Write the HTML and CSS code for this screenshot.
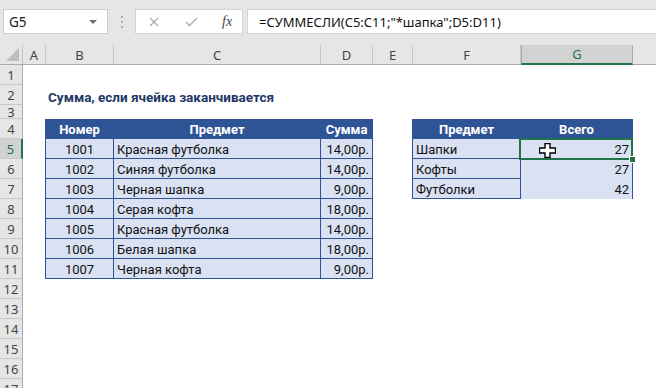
FILE: index.html
```html
<!DOCTYPE html>
<html lang="ru">
<head>
  <meta charset="UTF-8">
  <title>Сумма, если ячейка заканчивается</title>
  <link rel="stylesheet" href="styles.css">
</head>
<body>
  <!-- Formula bar -->
  <div class="toolbar">
    <div class="namebox"><span>G5</span><span class="caret"></span></div>
    <div class="grip"><i></i><i></i><i></i></div>
    <div class="fxbox">
      <svg class="ico-x" width="10" height="10" viewBox="0 0 10 10"><path d="M1 1L9 9M9 1L1 9" stroke="#a8a8a8" stroke-width="1.2" fill="none"/></svg>
      <svg class="ico-ok" width="13" height="10" viewBox="0 0 13 10"><path d="M1 5L4.5 8.5L12 1" stroke="#b4b4b4" stroke-width="1.6" fill="none"/></svg>
      <span class="fx">fx</span>
    </div>
    <div class="formula">=СУММЕСЛИ(C5:C11;"*шапка";D5:D11)</div>
  </div>

  <!-- Sheet -->
  <div class="sheet">
    <div class="row colheads">
      <div class="corner"><span class="tri"></span></div>
      <div class="ch w-a">A</div>
      <div class="ch w-b">B</div>
      <div class="ch w-c">C</div>
      <div class="ch w-d">D</div>
      <div class="ch w-e">E</div>
      <div class="ch w-f">F</div>
      <div class="ch w-g active">G</div>
      <div class="ch last"></div>
    </div>

    <div class="row"><div class="rh">1</div></div>
    <div class="row">
      <div class="rh">2</div>
      <div class="sp-a"></div>
      <div class="title">Сумма, если ячейка заканчивается</div>
    </div>
    <div class="row short"><div class="rh">3</div></div>

    <div class="row">
      <div class="rh">4</div>
      <div class="sp-a"></div>
      <div class="cell hd b center">Номер</div>
      <div class="cell hd c center">Предмет</div>
      <div class="cell hd d center">Сумма</div>
      <div class="sp-e"></div>
      <div class="cell hd f center">Предмет</div>
      <div class="cell hd g center">Всего</div>
    </div>
    <div class="row">
      <div class="rh active">5</div>
      <div class="sp-a"></div>
      <div class="cell b center">1001</div>
      <div class="cell c">Красная футболка</div>
      <div class="cell d right">14,00р.</div>
      <div class="sp-e"></div>
      <div class="cell f">Шапки</div>
      <div class="cell g open right selected">
        <svg class="cursor" width="17" height="15" viewBox="0 0 17 15"><path d="M6 0.5H11V5H16.5V10H11V14.5H6V10H0.5V5H6Z" fill="#fff" stroke="#000" stroke-width="1.4"/></svg>
        27
      </div>
    </div>
    <div class="row">
      <div class="rh">6</div>
      <div class="sp-a"></div>
      <div class="cell b center">1002</div>
      <div class="cell c">Синяя футболка</div>
      <div class="cell d right">14,00р.</div>
      <div class="sp-e"></div>
      <div class="cell f">Кофты</div>
      <div class="cell g open right">27</div>
    </div>
    <div class="row">
      <div class="rh">7</div>
      <div class="sp-a"></div>
      <div class="cell b center">1003</div>
      <div class="cell c">Черная шапка</div>
      <div class="cell d right">9,00р.</div>
      <div class="sp-e"></div>
      <div class="cell f">Футболки</div>
      <div class="cell g open right">42</div>
    </div>
    <div class="row">
      <div class="rh">8</div>
      <div class="sp-a"></div>
      <div class="cell b center">1004</div>
      <div class="cell c">Серая кофта</div>
      <div class="cell d right">18,00р.</div>
    </div>
    <div class="row">
      <div class="rh">9</div>
      <div class="sp-a"></div>
      <div class="cell b center">1005</div>
      <div class="cell c">Красная футболка</div>
      <div class="cell d right">14,00р.</div>
    </div>
    <div class="row">
      <div class="rh">10</div>
      <div class="sp-a"></div>
      <div class="cell b center">1006</div>
      <div class="cell c">Белая шапка</div>
      <div class="cell d right">18,00р.</div>
    </div>
    <div class="row">
      <div class="rh">11</div>
      <div class="sp-a"></div>
      <div class="cell b center">1007</div>
      <div class="cell c">Черная кофта</div>
      <div class="cell d right">9,00р.</div>
    </div>

    <div class="row"><div class="rh">12</div></div>
    <div class="row"><div class="rh">13</div></div>
    <div class="row"><div class="rh">14</div></div>
    <div class="row"><div class="rh">15</div></div>
    <div class="row"><div class="rh">16</div></div>
    <div class="row"><div class="rh">17</div></div>
  </div>
</body>
</html>
```

FILE: styles.css
```css
body {
  margin: 0;
  width: 656px;
  height: 388px;
  overflow: hidden;
  background: #fff;
  font-family: "Noto Sans", "Open Sans", sans-serif;
}

/* Formula bar */
.toolbar {
  height: 45px;
  background: #e6e6e6;
  display: flex;
  align-items: flex-start;
  padding-top: 9px;
  box-sizing: border-box;
}

.namebox {
  margin-left: 3px;
  width: 105px;
  height: 25px;
  background: #fff;
  border: 1px solid #cfcfcf;
  box-sizing: border-box;
  display: flex;
  align-items: center;
  justify-content: space-between;
  padding: 0 10px 0 5px;
  font-size: 13.5px;
  color: #222;
}

.caret {
  border-top: 4px solid #707070;
  border-left: 4px solid transparent;
  border-right: 4px solid transparent;
}

.grip {
  width: 27px;
  height: 25px;
  display: flex;
  flex-direction: column;
  align-items: center;
  justify-content: center;
  gap: 3px;
}

.grip i {
  width: 2px;
  height: 2px;
  background: #b0b0b0;
}

.fxbox {
  width: 108px;
  height: 25px;
  background: #fff;
  border: 1px solid #d4d4d4;
  box-sizing: border-box;
  display: flex;
  align-items: center;
  padding-left: 13px;
}

.ico-x {
  margin-right: 26px;
}

.ico-ok {
  margin-right: 24px;
}

.fx {
  font-family: "Liberation Serif", serif;
  font-style: italic;
  font-size: 14px;
  color: #444;
}

.formula {
  flex: 1;
  margin-left: 4px;
  height: 25px;
  background: #fff;
  border: 1px solid #d4d4d4;
  border-right: none;
  box-sizing: border-box;
  display: flex;
  align-items: center;
  padding-left: 11px;
  font-size: 13px;
  color: #111;
  white-space: nowrap;
}

/* Sheet */
.row {
  display: flex;
  height: 20px;
}

.row.short {
  height: 14px;
}

.colheads {
  background: #e6e6e6;
  border-bottom: 1px solid #ababab;
  box-sizing: border-box;
}

.corner {
  width: 23px;
  border-right: 1px solid #c6c6c6;
  box-sizing: border-box;
  position: relative;
}

.tri {
  position: absolute;
  right: 3px;
  bottom: 3px;
  border-bottom: 13px solid #bdbdbd;
  border-left: 13px solid transparent;
}

.ch {
  box-sizing: border-box;
  border-right: 1px solid #c6c6c6;
  display: flex;
  align-items: center;
  justify-content: center;
  font-size: 13px;
  color: #444;
}

.ch.w-a { width: 23px; }
.ch.w-b { width: 68px; }
.ch.w-c { width: 207px; }
.ch.w-d { width: 52px; }
.ch.w-e { width: 40px; }
.ch.w-f { width: 108px; }
.ch.w-g { width: 112px; }

.ch.last {
  flex: 1;
  border-right: none;
}

.ch.active {
  background: #d2d2d2;
  color: #217346;
  border-left: 1px solid #ababab;
  border-right: 1px solid #ababab;
  border-bottom: 2px solid #217346;
  margin-bottom: -1px;
}

.rh {
  width: 23px;
  flex: none;
  box-sizing: border-box;
  background: #e6e6e6;
  border-right: 1px solid #ababab;
  border-bottom: 1px solid #c8c8c8;
  display: flex;
  align-items: center;
  justify-content: center;
  font-size: 13px;
  color: #444;
}

.rh.active {
  background: #d2d2d2;
  color: #217346;
  border-right: 2px solid #217346;
}

.sp-a {
  width: 22px;
}

.sp-e {
  width: 39px;
}

.title {
  padding-left: 3px;
  padding-top: 3px;
  display: flex;
  align-items: center;
  font-family: "Roboto", "Noto Sans", sans-serif;
  font-weight: bold;
  font-size: 13.5px;
  color: #203864;
  white-space: nowrap;
}

.cell {
  box-sizing: border-box;
  height: 20px;
  background: #d9e1f2;
  border-right: 1px solid #2f5496;
  border-bottom: 1px solid #2f5496;
  display: flex;
  align-items: center;
  padding: 1px 3px 0;
  font-family: "Roboto", "Noto Sans", sans-serif;
  font-size: 13px;
  color: #111;
  white-space: nowrap;
}

.cell.hd {
  background: #2f5496;
  color: #fff;
  font-weight: bold;
}

.cell.b,
.cell.f {
  border-left: 1px solid #2f5496;
}

.cell.b { width: 69px; }
.cell.c { width: 207px; }
.cell.d { width: 52px; }
.cell.f { width: 109px; }
.cell.g { width: 112px; }

.cell.open {
  border-bottom: none;
}

.center {
  justify-content: center;
}

.right {
  justify-content: flex-end;
}

.selected {
  position: relative;
}

.selected::after {
  content: "";
  position: absolute;
  left: -2px;
  top: -1px;
  right: -1px;
  bottom: -1px;
  border: 2px solid #217346;
}

.selected::before {
  content: "";
  position: absolute;
  right: -4px;
  bottom: -4px;
  width: 5px;
  height: 5px;
  background: #217346;
  border: 1px solid #fff;
  z-index: 2;
}

.cursor {
  position: absolute;
  left: 18px;
  top: 4px;
}
```
